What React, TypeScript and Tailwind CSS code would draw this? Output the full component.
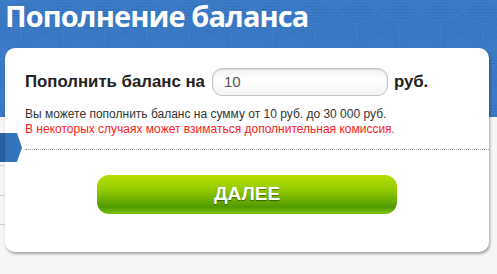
import React from "react";

function HeaderPattern() {
  return (
    <svg className="absolute inset-0 w-full h-full" xmlns="http://www.w3.org/2000/svg">
      <defs>
        <pattern id="h1" width="3" height="3" patternUnits="userSpaceOnUse">
          <rect width="3" height="1" fill="#3572bd" />
        </pattern>
        <pattern id="h2" width="3" height="3" patternUnits="userSpaceOnUse" patternTransform="rotate(60)">
          <rect width="3" height="1" fill="#3673be" />
        </pattern>
        <pattern id="h3" width="3" height="3" patternUnits="userSpaceOnUse" patternTransform="rotate(-60)">
          <rect width="3" height="1" fill="#3673be" />
        </pattern>
        <pattern id="cube" width="42" height="48" patternUnits="userSpaceOnUse">
          <rect width="42" height="48" fill="#3b7bc6" />
          <polygon points="21,0 42,12 21,24 0,12" fill="url(#h1)" />
          <polygon points="0,12 21,24 21,48 0,36" fill="url(#h2)" />
          <polygon points="42,12 42,36 21,48 21,24" fill="url(#h3)" />
          <polyline points="0,12 21,24 42,12" fill="none" stroke="#3d7ec9" strokeWidth="1" />
          <line x1="21" y1="24" x2="21" y2="48" stroke="#3d7ec9" strokeWidth="1" />
        </pattern>
      </defs>
      <rect width="100%" height="100%" fill="url(#cube)" />
    </svg>
  );
}

export default function App() {
  return (
    <div className="relative w-full h-[274px] overflow-hidden bg-[#f6f6f6] font-['Liberation_Sans',Arial,sans-serif]">
      <div className="absolute left-0 top-0 w-full h-[117px] bg-[#3b7bc6]">
        <HeaderPattern />
      </div>
      <div className="absolute left-0 top-[117px] w-[40px]">
        <div className="h-[16px] bg-[#f6f6f6]" />
        <div className="h-[29px] bg-[#2c5f9f]" />
        <div className="h-[4px] bg-[#f6f6f6] border-b border-[#cfcfcf]" />
        <div className="h-[30px] bg-[#f6f6f6] border-b border-[#cfcfcf]" />
        <div className="h-[29px] bg-[#f6f6f6] border-b border-[#cfcfcf]" />
      </div>

      <div className="relative">
        <h1 className="h-[48px] pl-[5px] pt-[1px] text-white font-bold text-[29px] leading-[30px] tracking-[-0.9px] whitespace-nowrap font-['Open_Sans','Noto_Sans',sans-serif]">
          Пополнение баланса
        </h1>

        <div className="relative ml-[5px] mr-[8px] h-[204px] bg-white rounded-[10px] shadow-[1px_2px_3px_rgba(0,0,0,0.35)] pt-[20px]">
          <div className="pl-[20px] flex items-center h-[28px]">
            <span className="text-[16.8px] font-bold text-[#222]">Пополнить баланс на</span>
            <div className="ml-[7px] w-[176px] h-[28px] rounded-[10px] border border-[#c4c4c4] bg-[linear-gradient(to_bottom,#f3f3f3,#ffffff_40%,#f4f4f4)] shadow-[inset_0_1px_2px_rgba(0,0,0,0.12)] flex items-center pl-[11px] text-[15px] text-[#555]">
              10
            </div>
            <span className="ml-[6px] text-[16.8px] font-bold text-[#222]">руб.</span>
          </div>

          <div className="pl-[20px] mt-[11px] text-[12px] leading-[15px]">
            <div className="text-[#333]">Вы можете пополнить баланс на сумму от 10 руб. до 30 000 руб.</div>
            <div className="text-[#ff1a1a]">В некоторых случаях может взиматься дополнительная комиссия.</div>
          </div>

          <div className="ml-[20px] mt-[12px] border-t border-dotted border-[#9a9a9a]" />

          <div className="mt-[25px] flex justify-center">
            <button className="w-[300px] h-[39px] rounded-[12px] bg-[linear-gradient(to_bottom,#b8e004_0%,#92c901_40%,#4f9a00_82%,#7cc203_100%)] text-white font-bold text-[19px] [text-shadow:0_1px_1px_rgba(0,0,0,0.45)]">
              ДАЛЕЕ
            </button>
          </div>

          <div className="absolute left-0 top-[85px] w-[17px] h-[29px] bg-[#3474bf] [clip-path:polygon(0_0,70%_0,100%_50%,70%_100%,0_100%)]" />
        </div>
      </div>
    </div>
  );
}
